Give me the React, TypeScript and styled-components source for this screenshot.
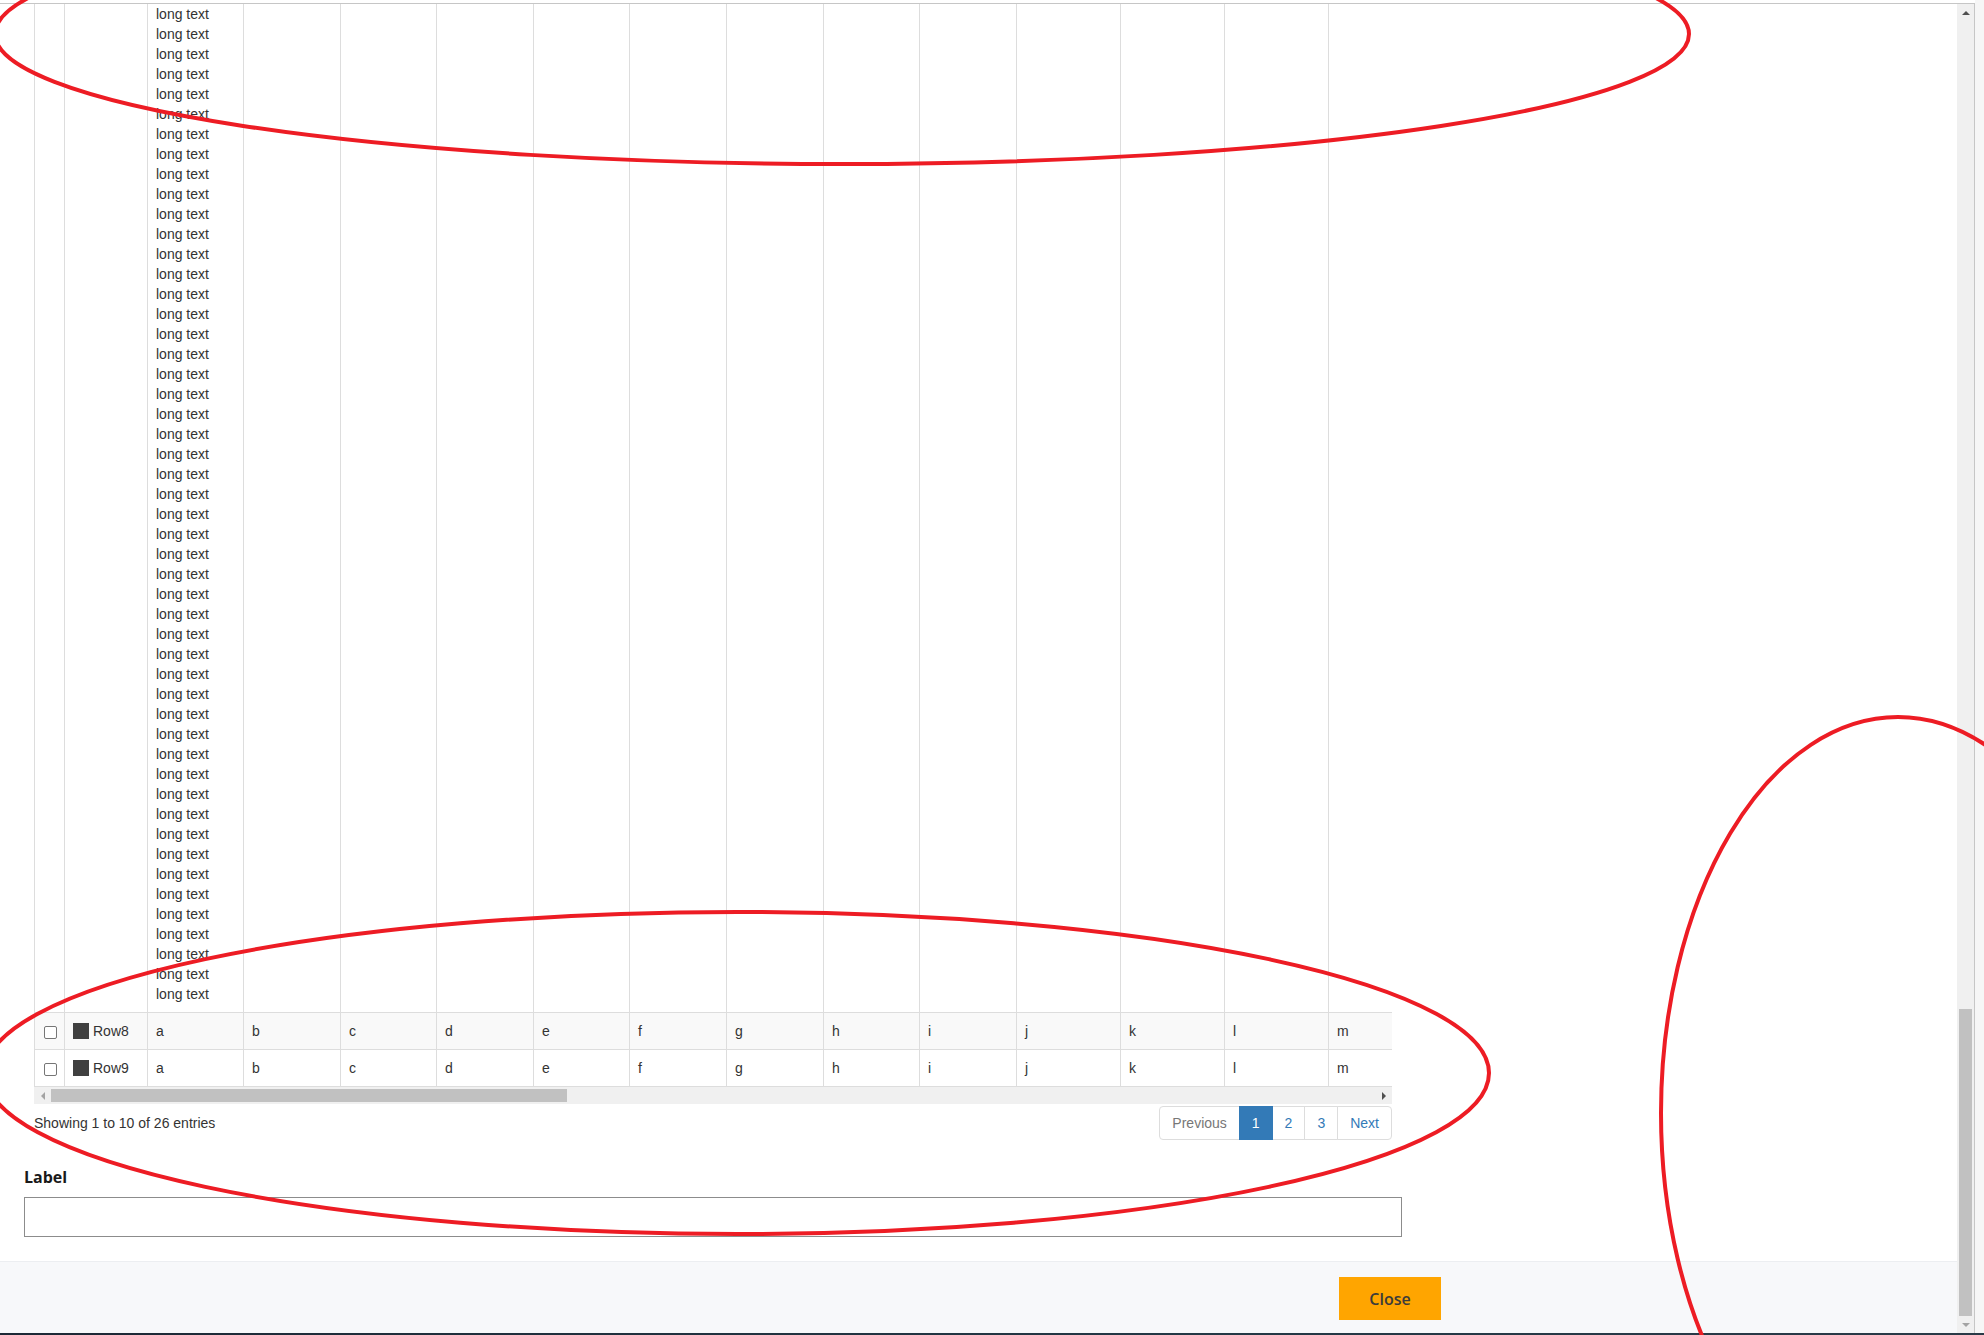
import * as React from 'react';
import styled, { createGlobalStyle } from 'styled-components';

const COLS = [30, 83, 96, 97, 96, 97, 96, 97, 97, 96, 97, 104, 104, 104, 104];
const LETTERS = ['a', 'b', 'c', 'd', 'e', 'f', 'g', 'h', 'i', 'j', 'k', 'l', 'm'];

const GlobalStyle = createGlobalStyle`
  html, body {
    margin: 0;
    padding: 0;
    overflow: hidden;
    background: #fff;
  }
  body {
    font-family: "Liberation Sans", Arial, sans-serif;
  }
`;

const Screen = styled.div`
  position: relative;
  width: 1984px;
  height: 1335px;
  display: flex;
  flex-direction: column;
  overflow: hidden;
  background: #fff;
`;

const Desk = styled.div`
  flex: 1;
  display: flex;
  min-height: 0;
`;

const Window = styled.div`
  flex: 1;
  display: flex;
  flex-direction: column;
  min-width: 0;
`;

const TopGap = styled.div`
  height: 3px;
  background: #fff;
`;

const Frame = styled.div`
  flex: 1;
  display: flex;
  min-height: 0;
  border-top: 1px solid #c6c6c6;
  border-right: 1px solid #c6c6c6;
`;

const RightStrip = styled.div`
  width: 9px;
  background: #f6f6f6;
`;

const Taskbar = styled.div`
  height: 2px;
  background: linear-gradient(90deg, #1c2835 0%, #233845 60%, #2a3a47 100%);
`;

const Viewport = styled.div`
  flex: 1;
  min-width: 0;
  display: flex;
  flex-direction: column;
  justify-content: flex-end;
  overflow: hidden;
  & > * {
    flex-shrink: 0;
  }
`;

/* scrollbars (drawn, page is scrolled to the bottom) */

const VScroll = styled.div`
  width: 17px;
  display: flex;
  flex-direction: column;
  background: #f0f0f0;
`;

const ScrollButton = styled.div`
  width: 17px;
  height: 17px;
  display: flex;
  align-items: center;
  justify-content: center;
  flex-shrink: 0;
`;

const Arrow = styled.span<{ $dir: 'up' | 'down' | 'left' | 'right'; $off?: boolean }>`
  width: 0;
  height: 0;
  border-style: solid;
  border-color: transparent;
  ${({ $dir, $off }) => {
    const c = $off ? '#a3a3a3' : '#505050';
    switch ($dir) {
      case 'up':
        return `border-width: 0 4px 4px 4px; border-bottom-color: ${c};`;
      case 'down':
        return `border-width: 4px 4px 0 4px; border-top-color: ${c};`;
      case 'left':
        return `border-width: 4px 4px 4px 0; border-right-color: ${c};`;
      default:
        return `border-width: 4px 0 4px 4px; border-left-color: ${c};`;
    }
  }}
`;

const VTrack = styled.div`
  flex: 1;
  display: flex;
  flex-direction: column;
  justify-content: flex-end;
`;

const VThumb = styled.div`
  height: 307px;
  margin: 0 2px;
  background: #c1c1c1;
`;

const HScroll = styled.div`
  display: flex;
  height: 17px;
  background: #f0f0f0;
`;

const HTrack = styled.div`
  flex: 1;
  display: flex;
  align-items: center;
`;

const HThumb = styled.div<{ $width: number }>`
  width: ${({ $width }) => $width}px;
  height: 13px;
  background: #c1c1c1;
`;

/* modal body */

const ModalBody = styled.div`
  padding: 0 0 24px 24px;
`;

const BodyInner = styled.div`
  width: 1378px;
`;

const TableSection = styled.div`
  padding: 0 10px;
`;

const TableClip = styled.div`
  width: 1358px;
  overflow: hidden;
`;

const Row = styled.div<{ $striped?: boolean }>`
  display: grid;
  grid-template-columns: ${COLS.map((w) => `${w}px`).join(' ')};
  width: max-content;
  background: ${({ $striped }) => ($striped ? '#f9f9f9' : '#fff')};
`;

const Cell = styled.div`
  box-sizing: border-box;
  border-left: 1px solid #ddd;
  border-bottom: 1px solid #ddd;
  padding: 8px;
  font-size: 14px;
  line-height: 20px;
  color: #333;
  min-width: 0;
  &:last-child {
    border-right: 1px solid #ddd;
  }
`;

const CheckCell = styled(Cell)`
  display: flex;
  justify-content: center;
  align-items: center;
  padding: 8px 0;
`;

const Check = styled.input`
  appearance: none;
  box-sizing: border-box;
  width: 13px;
  height: 13px;
  margin: 2px 0 0 1px;
  border: 1px solid #767676;
  border-radius: 2px;
  background: #fff;
`;

const NameCell = styled(Cell)`
  display: flex;
  align-items: center;
  gap: 4px;
`;

const Swatch = styled.span`
  width: 16px;
  height: 16px;
  background: #404040;
  flex-shrink: 0;
`;

const PagingRow = styled.div`
  display: flex;
  justify-content: space-between;
  align-items: center;
  margin-top: 2px;
  font-size: 14px;
  color: #333;
`;

const Info = styled.div`
  line-height: 20px;
`;

const Pager = styled.ul`
  display: flex;
  margin: 0;
  padding: 0;
  list-style: none;
`;

const PageLink = styled.li<{ $active?: boolean; $disabled?: boolean }>`
  padding: 6px 12px;
  margin-left: -1px;
  line-height: 20px;
  font-size: 14px;
  border: 1px solid ${({ $active }) => ($active ? '#337ab7' : '#ddd')};
  background: ${({ $active }) => ($active ? '#337ab7' : '#fff')};
  color: ${({ $active, $disabled }) => ($active ? '#fff' : $disabled ? '#777' : '#337ab7')};
  position: relative;
  z-index: ${({ $active }) => ($active ? 2 : 0)};
  &:first-child {
    margin-left: 0;
    border-radius: 4px 0 0 4px;
  }
  &:last-child {
    border-radius: 0 4px 4px 0;
  }
`;

const Field = styled.div`
  margin-top: 26px;
`;

const Label = styled.label`
  display: block;
  margin-bottom: 9px;
  font-family: "Open Sans", "Liberation Sans", sans-serif;
  font-weight: 700;
  font-size: 16px;
  line-height: 22px;
  color: #1a1a1a;
`;

const TextInput = styled.input`
  display: block;
  box-sizing: border-box;
  width: 100%;
  height: 40px;
  margin: 0;
  border: 1px solid #8c8c8c;
  background: #fff;
`;

/* footer */

const Footer = styled.div`
  border-top: 1px solid #eceef1;
  background: #f7f8fa;
  padding: 15px 0 13px;
`;

const FooterInner = styled.div`
  width: 1441px;
  display: flex;
  justify-content: flex-end;
`;

const CloseButton = styled.button`
  width: 102px;
  height: 43px;
  border: none;
  background: #ffa500;
  color: #3b3b3b;
  font-family: "Open Sans", "Liberation Sans", sans-serif;
  font-weight: 600;
  font-size: 16px;
  padding: 0;
`;

/* annotation drawn on top of the capture */

const Marks = styled.svg`
  position: absolute;
  top: 0;
  left: 0;
  pointer-events: none;
  z-index: 10;
`;

const DataRow: React.FC<{ label: string; striped?: boolean }> = ({ label, striped }) => (
  <Row $striped={striped}>
    <CheckCell>
      <Check type="checkbox" />
    </CheckCell>
    <NameCell>
      <Swatch />
      {label}
    </NameCell>
    {LETTERS.map((l) => (
      <Cell key={l}>{l}</Cell>
    ))}
  </Row>
);

export default function App(): JSX.Element {
  return (
    <Screen>
      <GlobalStyle />
      <Desk>
        <Window>
          <TopGap />
          <Frame>
            <Viewport>
              <ModalBody>
                <BodyInner>
                  <TableSection>
                    <TableClip>
                      <Row>
                        <Cell />
                        <Cell />
                        <Cell>{'long text '.repeat(50).trim()}</Cell>
                        {LETTERS.slice(1).map((l) => (
                          <Cell key={l} />
                        ))}
                      </Row>
                      <DataRow label="Row8" striped />
                      <DataRow label="Row9" />
                    </TableClip>
                    <HScroll>
                      <ScrollButton>
                        <Arrow $dir="left" $off />
                      </ScrollButton>
                      <HTrack>
                        <HThumb $width={516} />
                      </HTrack>
                      <ScrollButton>
                        <Arrow $dir="right" />
                      </ScrollButton>
                    </HScroll>
                    <PagingRow>
                      <Info>Showing 1 to 10 of 26 entries</Info>
                      <Pager>
                        <PageLink $disabled>Previous</PageLink>
                        <PageLink $active>1</PageLink>
                        <PageLink>2</PageLink>
                        <PageLink>3</PageLink>
                        <PageLink>Next</PageLink>
                      </Pager>
                    </PagingRow>
                  </TableSection>
                  <Field>
                    <Label>Label</Label>
                    <TextInput type="text" />
                  </Field>
                </BodyInner>
              </ModalBody>
              <Footer>
                <FooterInner>
                  <CloseButton>Close</CloseButton>
                </FooterInner>
              </Footer>
            </Viewport>
            <VScroll>
              <ScrollButton>
                <Arrow $dir="up" />
              </ScrollButton>
              <VTrack>
                <VThumb />
              </VTrack>
              <ScrollButton>
                <Arrow $dir="down" $off />
              </ScrollButton>
            </VScroll>
          </Frame>
        </Window>
        <RightStrip />
      </Desk>
      <Taskbar />
      <Marks width={1984} height={1335} viewBox="0 0 1984 1335">
        <g fill="none" stroke="#ed1c24" strokeWidth={4}>
          <ellipse cx={842} cy={34} rx={847} ry={130} />
          <ellipse cx={737} cy={1073} rx={752} ry={161} />
          <ellipse cx={1898} cy={1113} rx={237} ry={396} />
        </g>
      </Marks>
    </Screen>
  );
}
